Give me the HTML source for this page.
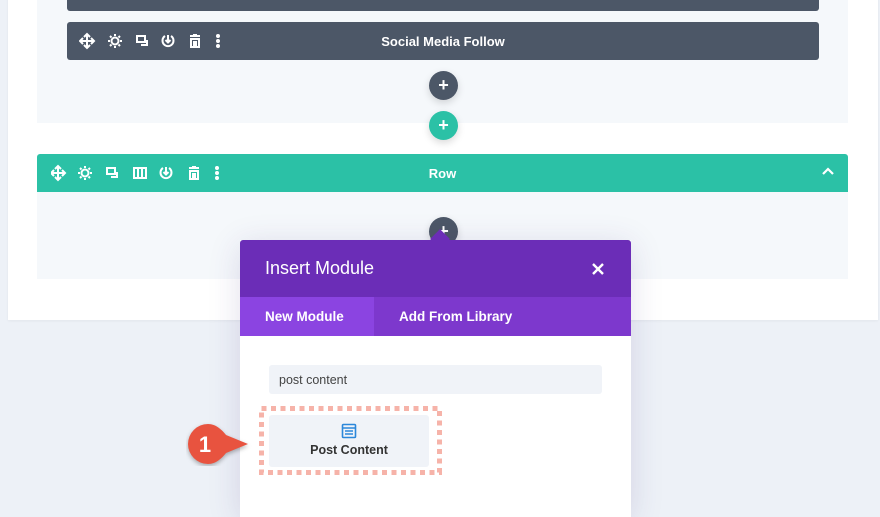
<!DOCTYPE html>
<html><head><meta charset="utf-8"><style>
*{box-sizing:border-box;margin:0;padding:0}
html,body{width:880px;height:517px;overflow:hidden}
body{background:#edf1f7;position:relative;font-family:"Liberation Sans",sans-serif}
.abs{position:absolute}
.card{left:8px;top:-5px;width:870px;height:325px;background:#fff;box-shadow:0 1px 3px rgba(0,0,0,.05)}
.sec{background:#f5f8fb}
.bar{background:#4c5767;border-radius:3px;color:#fff}
.t{font-weight:bold;font-size:13px;color:#fff;text-align:center}
.plus{width:29px;height:29px;border-radius:50%;color:#fff;font-size:18px;font-weight:bold;text-align:center;line-height:28px;box-shadow:0 3px 8px rgba(0,0,0,.15)}
</style></head><body>
<div class="abs card"></div>
<div class="abs sec" style="left:37px;top:0;width:811px;height:123px"></div>
<div class="abs sec" style="left:37px;top:192px;width:811px;height:87px"></div>
<div class="abs bar" style="left:67px;top:-5px;width:752px;height:16px"></div>
<div class="abs bar" style="left:67px;top:22px;width:752px;height:38px">
<div class="abs t" style="left:0;width:752px;top:12px">Social Media Follow</div>
<svg class="abs" style="left:12px;top:10px" width="160" height="18" viewBox="0 0 160 18" fill="none" stroke="#fff" stroke-width="2">
<path d="M8 2v14M1 9h14M5 5l3-3 3 3M5 13l3 3 3-3M4 6l-3 3 3 3M12 6l3 3-3 3"/>
<circle cx="36" cy="9" r="3.5"/><path d="M36 2v2M36 14v2M29 9h2M41 9h2M31 4l1.5 1.5M39.5 12.5L41 14M31 14l1.5-1.5M39.5 5.5L41 4"/>
<path d="M58 4h8v6h-8zM68 8v5h-6" />
<path d="M86 4a5.5 5.5 0 1 0 6 0M89 3v7M86.5 8l2.5 2.5 2.5-2.5"/>
<path d="M111 4h10M114 3h4M112 7h8v8h-8zM115 9v5M117 9v5"/>
<circle cx="139" cy="4" r="1" fill="#fff"/><circle cx="139" cy="9" r="1" fill="#fff"/><circle cx="139" cy="14" r="1" fill="#fff"/>
</svg>
</div>
<div class="abs plus" style="left:429px;top:71px;background:#4c5767">+</div>
<div class="abs plus" style="left:429px;top:111px;background:#2bc1a6">+</div>
<div class="abs" style="left:37px;top:154px;width:811px;height:38px;background:#2bc1a6;border-radius:3px 3px 0 0">
<div class="abs t" style="left:0;width:811px;top:12px">Row</div>
<svg class="abs" style="left:14px;top:10px" width="200" height="18" viewBox="0 0 200 18" fill="none" stroke="#fff" stroke-width="2">
<path d="M7 2v14M0 9h14M4 5l3-3 3 3M4 13l3 3 3-3M3 6l-3 3 3 3M11 6l3 3-3 3"/>
<circle cx="34" cy="9" r="3.5"/><path d="M34 2v2M34 14v2M27 9h2M39 9h2M29 4l1.5 1.5M37.5 12.5L39 14M29 14l1.5-1.5M37.5 5.5L39 4"/>
<path d="M56 4h8v6h-8zM66 8v5h-6"/>
<path d="M83 4h12v10h-12zM87 4v10M91 4v10"/>
<path d="M112 4a5.5 5.5 0 1 0 6 0M115 3v7M112.5 8l2.5 2.5 2.5-2.5"/>
<path d="M138 4h10M141 3h4M139 7h8v8h-8zM142 9v5M144 9v5"/>
<circle cx="166" cy="4" r="1" fill="#fff"/><circle cx="166" cy="9" r="1" fill="#fff"/><circle cx="166" cy="14" r="1" fill="#fff"/>
</svg>
<svg class="abs" style="left:785px;top:13px" width="12" height="10" viewBox="0 0 12 10"><path d="M1 7l5-5 5 5" stroke="#fff" stroke-width="2.2" fill="none"/></svg>
</div>
<div class="abs plus" style="left:429px;top:217px;background:#4c5767">+</div>
<div class="abs" style="left:240px;top:240px;width:391px;height:277px;background:#fff;box-shadow:0 5px 30px rgba(60,40,120,.15)">
<div class="abs" style="left:0;top:0;width:391px;height:57px;background:#6b2db7;border-radius:3px 3px 0 0"></div>
<div class="abs" style="left:193px;top:-8px;width:14px;height:14px;background:#6b2db7;transform:rotate(45deg)"></div>
<div class="abs" style="left:25px;top:18px;color:#fff;font-size:18px">Insert Module</div>
<svg class="abs" style="left:351px;top:22px" width="14" height="14" viewBox="0 0 14 14"><path d="M2 2l10 10M12 2L2 12" stroke="#fff" stroke-width="2.4"/></svg>
<div class="abs" style="left:0;top:57px;width:391px;height:39px;background:#7d38cd"></div>
<div class="abs" style="left:0;top:57px;width:134px;height:39px;background:#8b44e1"></div>
<div class="abs" style="left:25px;top:69px;color:#fff;font-size:13.5px;font-weight:bold">New Module</div>
<div class="abs" style="left:159px;top:69px;color:#fff;font-size:13.5px;font-weight:bold">Add From Library</div>
<div class="abs" style="left:29px;top:125px;width:333px;height:29px;background:#f0f3f8;border-radius:3px"></div>
<div class="abs" style="left:39px;top:133px;color:#444;font-size:12.5px">post content</div>
<svg class="abs" style="left:19px;top:166px" width="183" height="69" viewBox="0 0 183 69"><rect x="2.5" y="2.5" width="178" height="64" fill="none" stroke="#f6b3a9" stroke-width="5" stroke-dasharray="5 4.5"/></svg>
<div class="abs" style="left:29px;top:175px;width:160px;height:52px;background:#f0f3f8;border-radius:3px"></div>
<svg class="abs" style="left:101px;top:183px" width="16" height="16" viewBox="0 0 16 16" fill="none" stroke="#2b87da" stroke-width="1.6"><rect x="1.5" y="1.5" width="13" height="13" rx="1"/><path d="M2 5h12M4 8h8M4 11h8"/></svg>
<div class="abs" style="left:29px;top:203px;width:160px;text-align:center;color:#333;font-size:12.5px;font-weight:bold">Post Content</div>
</div>
<svg class="abs" style="left:186px;top:422px" width="66" height="44" viewBox="0 0 66 44"><path d="M22 2a20 20 0 1 0 0 40c8 0 14-6 18-11l22-9-22-9c-4-5-10-11-18-11z" fill="#e8533f" filter="drop-shadow(0 2px 2px rgba(0,0,0,.3))"/><text x="19" y="30" fill="#fff" font-family="Liberation Sans" font-size="22" font-weight="bold" text-anchor="middle">1</text></svg>
</body></html>
